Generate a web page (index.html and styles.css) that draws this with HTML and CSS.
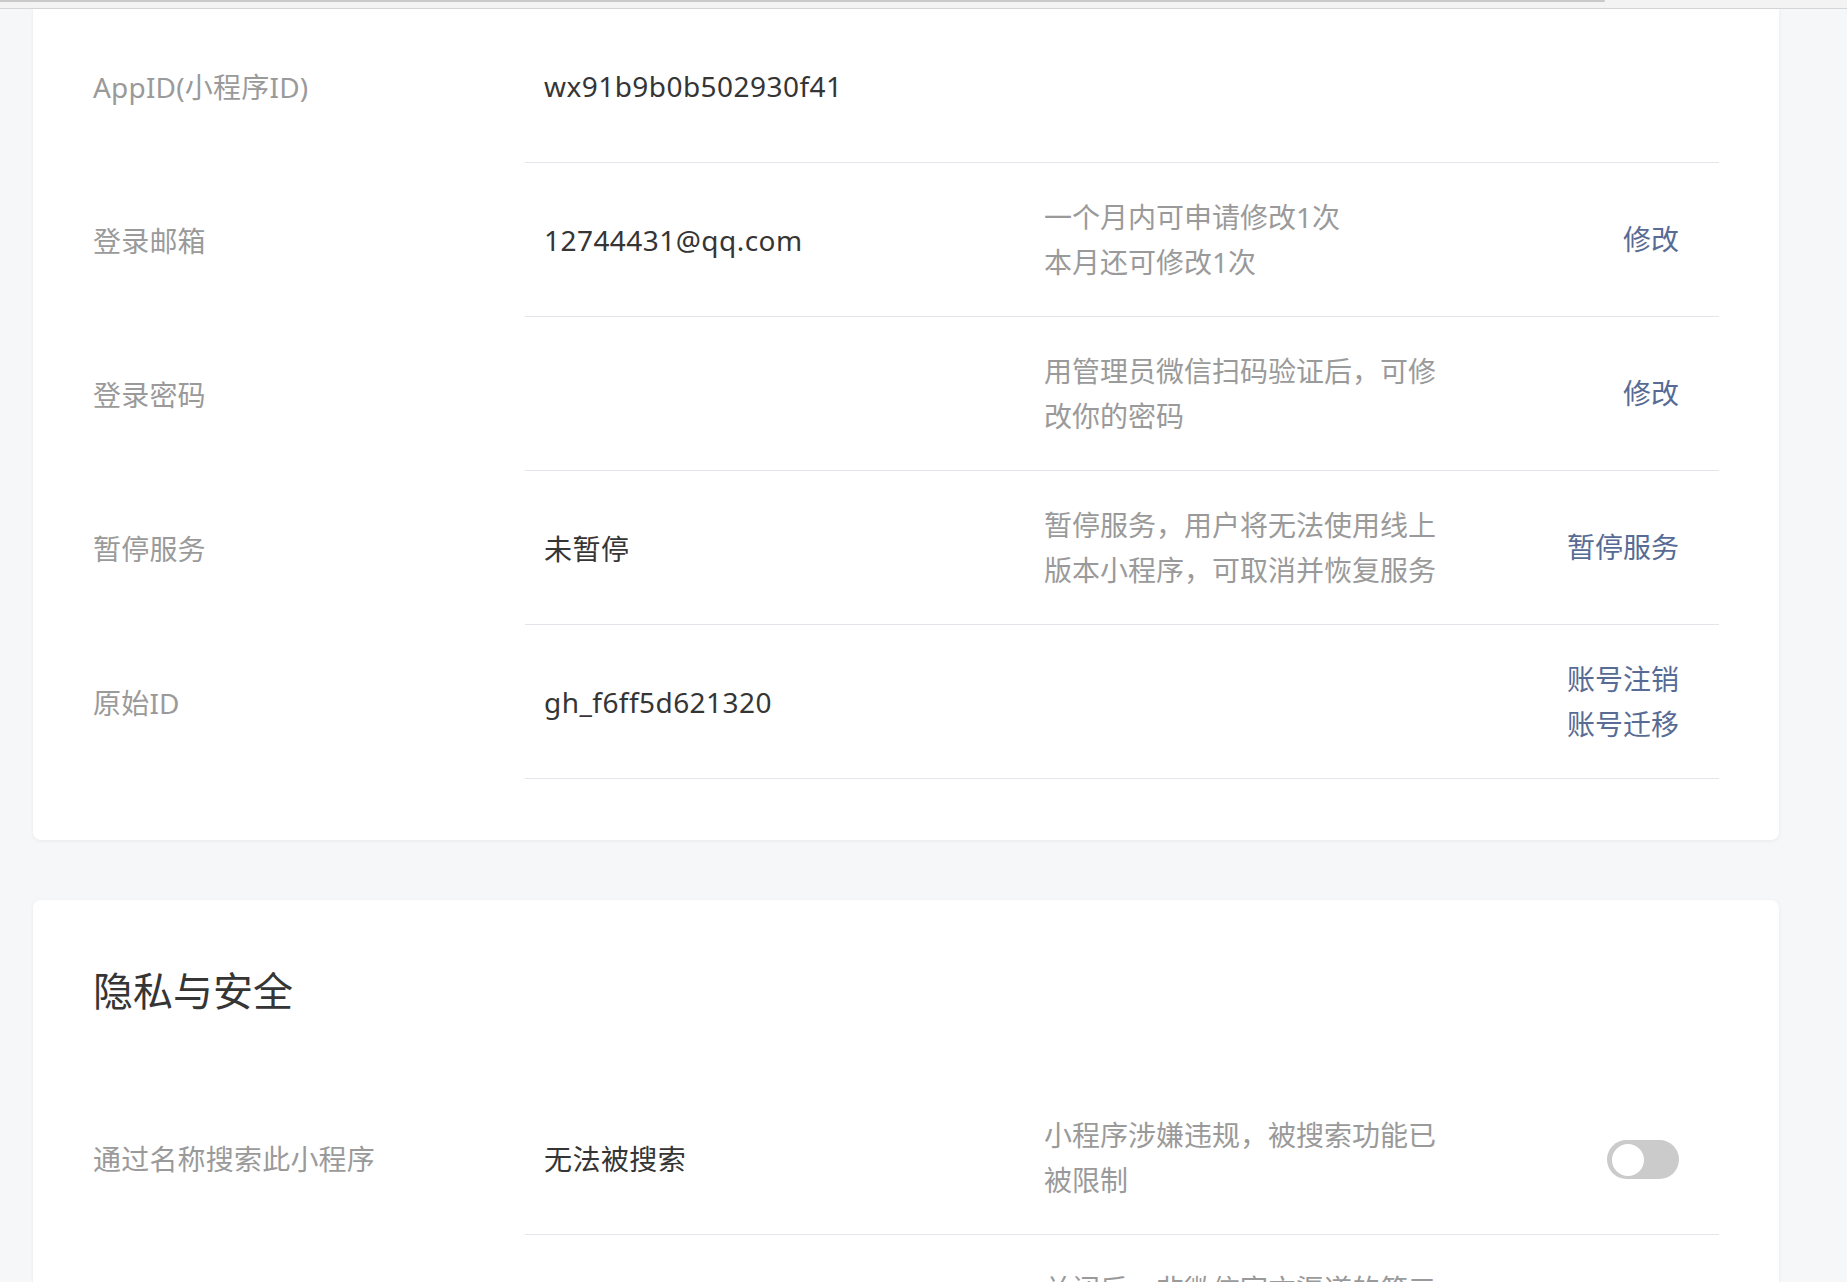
FILE: index.html
```html
<!DOCTYPE html>
<html lang="zh-CN">
<head>
<meta charset="utf-8">
<title>设置</title>
<link rel="stylesheet" href="styles.css">
</head>
<body>
<div class="topbar"><div class="thumb"></div></div>
<main class="page">
  <section class="card card-first">
    <div class="row">
      <div class="label">AppID(小程序ID)</div>
      <div class="main">
        <div class="value">wx91b9b0b502930f41</div>
        <div class="desc"></div>
        <div class="action"></div>
      </div>
    </div>
    <div class="row">
      <div class="label">登录邮箱</div>
      <div class="main">
        <div class="value">12744431@qq.com</div>
        <div class="desc">一个月内可申请修改1次<br>本月还可修改1次</div>
        <div class="action"><a class="link">修改</a></div>
      </div>
    </div>
    <div class="row">
      <div class="label">登录密码</div>
      <div class="main">
        <div class="value"></div>
        <div class="desc">用管理员微信扫码验证后，可修改你的密码</div>
        <div class="action"><a class="link">修改</a></div>
      </div>
    </div>
    <div class="row">
      <div class="label">暂停服务</div>
      <div class="main">
        <div class="value">未暂停</div>
        <div class="desc">暂停服务，用户将无法使用线上版本小程序，可取消并恢复服务</div>
        <div class="action"><a class="link">暂停服务</a></div>
      </div>
    </div>
    <div class="row">
      <div class="label">原始ID</div>
      <div class="main">
        <div class="value">gh_f6ff5d621320</div>
        <div class="desc"></div>
        <div class="action"><a class="link">账号注销</a><a class="link">账号迁移</a></div>
      </div>
    </div>
  </section>

  <section class="card card-second">
    <h2 class="card-title">隐私与安全</h2>
    <div class="row">
      <div class="label">通过名称搜索此小程序</div>
      <div class="main">
        <div class="value">无法被搜索</div>
        <div class="desc">小程序涉嫌违规，被搜索功能已被限制</div>
        <div class="action"><span class="switch"><span class="knob"></span></span></div>
      </div>
    </div>
    <div class="row">
      <div class="label"></div>
      <div class="main">
        <div class="value"></div>
        <div class="desc">关闭后，非微信官方渠道的第三方平台将无法获取</div>
        <div class="action"></div>
      </div>
    </div>
  </section>
</main>
</body>
</html>
```
FILE: styles.css
```css
html, body {
  margin: 0;
  padding: 0;
}
body {
  background: #f6f7f9;
  font-family: "Noto Sans", "Noto Sans CJK SC", sans-serif;
  font-size: 28px;
  color: #353535;
  overflow: hidden;
  height: 1282px;
}
.topbar {
  height: 8px;
  background: #f3f3f3;
  border-bottom: 1px solid #d6d6d6;
}
.thumb {
  width: 1605px;
  height: 2px;
  background: #c9c9c9;
  border-radius: 0 2px 2px 0;
}
.page {
  padding: 0 68px 0 33px;
  display: flex;
  flex-direction: column;
  gap: 60px;
}
.card {
  background: #fff;
  border-radius: 8px;
  box-shadow: 0 1px 4px rgba(0, 0, 0, 0.06);
  padding: 0 60px 61px 60px;
}
.card-first {
  border-radius: 0 0 8px 8px;
}
.card-second {
  padding-top: 63px;
}
.card-title {
  margin: 0 0 62px 0;
  font-size: 40px;
  font-weight: normal;
  line-height: 56px;
  color: #353535;
}
.row {
  display: flex;
  height: 154px;
}
.label {
  width: 432px;
  flex: none;
  display: flex;
  align-items: center;
  color: #9a9a9a;
  letter-spacing: 0.2px;
}
.main {
  flex: 1;
  display: flex;
  align-items: center;
  border-bottom: 1px solid #e4e4ea;
  padding: 0 40px 0 19px;
}
.value {
  width: 500px;
  flex: none;
  color: #353535;
  letter-spacing: 0.45px;
}
.desc {
  width: 400px;
  flex: none;
  color: #9a9a9a;
  line-height: 44.8px;
}
.action {
  flex: 1;
  display: flex;
  flex-direction: column;
  align-items: flex-end;
  line-height: 44.8px;
}
.link {
  color: #576b95;
  text-decoration: none;
  cursor: pointer;
}
.switch {
  width: 72px;
  height: 39px;
  margin-top: 4px;
  border-radius: 20px;
  background: #cbcbcb;
  position: relative;
  display: block;
}
.knob {
  position: absolute;
  left: 5px;
  top: 4px;
  width: 32px;
  height: 32px;
  border-radius: 50%;
  background: #fff;
}
```
